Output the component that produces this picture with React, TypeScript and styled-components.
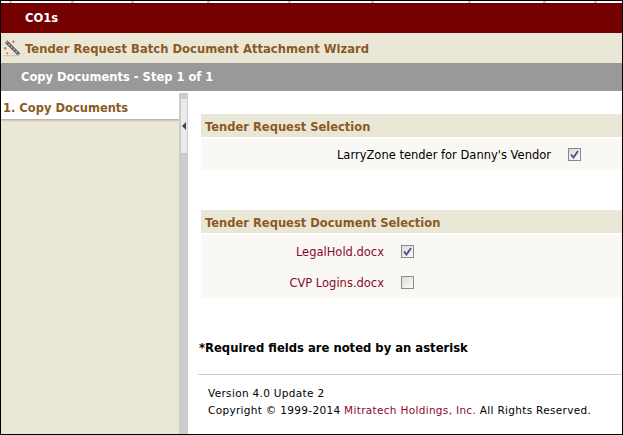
import styled, { createGlobalStyle } from 'styled-components';

const GlobalStyle = createGlobalStyle`
  html, body {
    margin: 0;
    padding: 0;
    background: #fff;
  }
  body {
    font-family: "DejaVu Sans", Verdana, sans-serif;
    font-size: 11.5px;
    color: #000;
  }
`;

const tabWidths = [11, 62, 60, 76, 81, 83, 97, 75, 51];

const WandIcon = () => (
  <svg width="18" height="18" viewBox="0 0 18 18">
    <path d="M1 16.7h13" stroke="#c4c0b2" strokeWidth="1" />
    <path d="M3 2.5l13.2 13.2" stroke="#555" strokeWidth="3.2" />
    <path d="M3 2.5l13.2 13.2" stroke="#d8d8d8" strokeWidth="1.1" strokeDasharray="2 1.4" />
    <path d="M10.3 1.2l1.5 1.5-1.5 1.5-1.5-1.5z" fill="#e8642a" />
    <path d="M2.2 7.8l1.5 1.5-1.5 1.5-1.5-1.5z" fill="#e8642a" />
    <path d="M4.3 13.1l1.2 1.2-1.2 1.2-1.2-1.2z" fill="#e8642a" />
  </svg>
);

const Check = () => (
  <svg width="9" height="9" viewBox="0 0 9 9">
    <path d="M1 4.5l2.5 3L8 1" fill="none" stroke="#47548f" strokeWidth="1.9" />
  </svg>
);

const App = () => (
  <>
    <GlobalStyle />
    <Window>
      <TabStrip>
        {tabWidths.map((w, i) => (
          <TabMark key={i} $width={w} />
        ))}
      </TabStrip>
      <ModuleBar>CO1s</ModuleBar>
      <TitleBar>
        <WandIcon />
        <TitleText>Tender Request Batch Document Attachment Wizard</TitleText>
      </TitleBar>
      <StepBar>Copy Documents - Step 1 of 1</StepBar>
      <Body>
        <Sidebar>
          <NavItem>1. Copy Documents</NavItem>
        </Sidebar>
        <Splitter>
          <SplitterHandle>
            <CollapseArrow />
          </SplitterHandle>
        </Splitter>
        <Main>
          <Section $top={23}>
            <SectionHeader>Tender Request Selection</SectionHeader>
            <SectionBody>
              <Row $labelWidth={350}>
                <RowLabel>LarryZone tender for Danny's Vendor</RowLabel>
                <CheckBox><Check /></CheckBox>
              </Row>
            </SectionBody>
          </Section>
          <Section $top={40}>
            <SectionHeader>Tender Request Document Selection</SectionHeader>
            <SectionBody $padTop={1}>
              <Row $labelWidth={183}>
                <RowLabel $link>LegalHold.docx</RowLabel>
                <CheckBox><Check /></CheckBox>
              </Row>
              <Row $labelWidth={183}>
                <RowLabel $link>CVP Logins.docx</RowLabel>
                <CheckBox />
              </Row>
            </SectionBody>
          </Section>
          <Required>*Required fields are noted by an asterisk</Required>
          <Footer>
            <FooterLine>Version 4.0 Update 2</FooterLine>
            <FooterLine>
              Copyright © 1999-2014 <FooterLink>Mitratech Holdings, Inc.</FooterLink> All Rights Reserved.
            </FooterLine>
          </Footer>
        </Main>
      </Body>
    </Window>
  </>
);

export default App;

const Window = styled.div`
  box-sizing: border-box;
  width: 623px;
  height: 435px;
  border: 1px solid #000;
  display: flex;
  flex-direction: column;
  overflow: hidden;
`;

const TabStrip = styled.div`
  height: 2px;
  flex: none;
  display: flex;
  background: #fff;
`;

const TabMark = styled.div<{ $width: number }>`
  box-sizing: border-box;
  width: ${(p) => p.$width}px;
  border-right: 3px solid #c8c8c8;
`;

const ModuleBar = styled.div`
  height: 30px;
  flex: none;
  padding-left: 24px;
  display: flex;
  align-items: center;
  background: #750000;
  color: #fff;
  font-weight: bold;
  font-size: 11.5px;
`;

const TitleBar = styled.div`
  height: 30px;
  flex: none;
  padding-left: 2px;
  display: flex;
  align-items: center;
  gap: 4px;
  background: #ebe7d7;
`;

const TitleText = styled.span`
  padding-top: 1px;
  color: #8b5a24;
  font-weight: bold;
  font-size: 11.6px;
`;

const StepBar = styled.div`
  height: 28px;
  flex: none;
  padding-left: 20px;
  display: flex;
  align-items: center;
  background: #999;
  color: #fff;
  font-weight: bold;
  font-size: 11.5px;
`;

const Body = styled.div`
  flex: 1;
  min-height: 0;
  display: flex;
`;

const Sidebar = styled.div`
  width: 178px;
  flex: none;
  background: #ebe7d7;
`;

const NavItem = styled.div`
  box-sizing: content-box;
  height: 22px;
  padding: 6px 0 0 2px;
  display: flex;
  align-items: center;
  background: #fff;
  box-shadow: 0 1px 0 #c2b79e, 0 2px 0 #d3ccb8, 0 3px 0 #e2dcca;
  color: #8b5a24;
  font-weight: bold;
  font-size: 11.5px;
`;

const Splitter = styled.div`
  width: 9px;
  flex: none;
  margin-top: 2px;
  padding: 6px 1px 0 2px;
  box-sizing: border-box;
  background: #ccc;
`;

const SplitterHandle = styled.div`
  height: 54px;
  display: flex;
  align-items: center;
  justify-content: center;
  background: #ebebeb;
`;

const CollapseArrow = styled.div`
  width: 0;
  height: 0;
  border-top: 4px solid transparent;
  border-bottom: 4px solid transparent;
  border-right: 4px solid #444;
`;

const Main = styled.div`
  flex: 1;
  min-width: 0;
  display: flex;
  flex-direction: column;
  background: #fff;
`;

const Section = styled.section<{ $top: number }>`
  margin: ${(p) => p.$top}px 0 0 13px;
`;

const SectionHeader = styled.div`
  box-sizing: border-box;
  height: 23px;
  padding: 2px 0 0 4px;
  display: flex;
  align-items: center;
  background: #ebe7d7;
  color: #8b5a24;
  font-weight: bold;
  font-size: 11.5px;
`;

const SectionBody = styled.div<{ $padTop?: number }>`
  margin-top: 2px;
  padding-top: ${(p) => p.$padTop ?? 0}px;
  background: #f9f8f4;
`;

const Row = styled.div<{ $labelWidth: number }>`
  height: 31px;
  display: grid;
  grid-template-columns: ${(p) => p.$labelWidth}px 13px;
  column-gap: 17px;
  align-items: center;
`;

const RowLabel = styled.span<{ $link?: boolean }>`
  text-align: right;
  white-space: nowrap;
  color: ${(p) => (p.$link ? '#8b0a2a' : '#000')};
  font-size: 11.5px;
`;

const CheckBox = styled.span`
  box-sizing: border-box;
  width: 13px;
  height: 13px;
  display: flex;
  align-items: center;
  justify-content: center;
  border: 1px solid #8a8a8a;
  background: linear-gradient(135deg, #dcdcd8, #fbfbfb);
`;

const Required = styled.div`
  margin: 43px 0 0 11px;
  font-weight: bold;
  font-size: 11.6px;
`;

const Footer = styled.footer`
  margin: 19px 0 0 10px;
  border-top: 1px solid #ccc;
  padding: 12px 0 0 10px;
  display: flex;
  flex-direction: column;
  gap: 4px;
`;

const FooterLine = styled.div`
  font-size: 10.5px;
  letter-spacing: 0.32px;
  line-height: 13px;
  white-space: nowrap;
`;

const FooterLink = styled.span`
  color: #8b0a2a;
`;
